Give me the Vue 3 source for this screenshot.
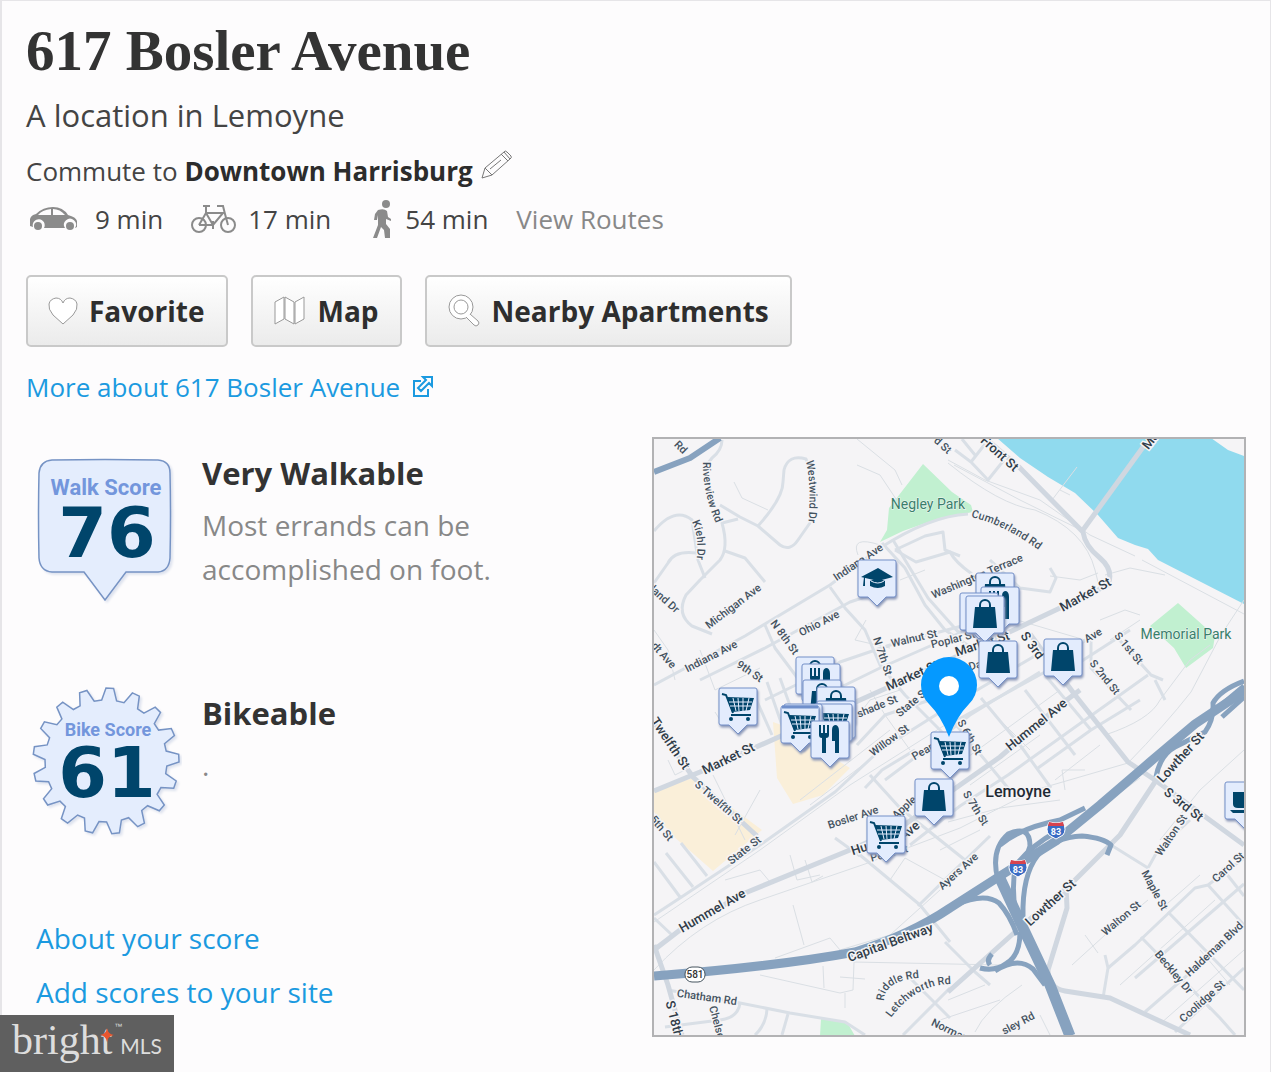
<script setup>
const gear = (() => {
  const teeth = 17
  const pts = []
  const at = (r, deg) => {
    const a = (deg * Math.PI) / 180
    return `${(74 + r * Math.cos(a)).toFixed(1)},${(76 + r * Math.sin(a)).toFixed(1)}`
  }
  for (let i = 0; i < teeth; i++) {
    const c = -87 + (i * 360) / teeth
    pts.push(at(61, c - 7), at(73, c - 3), at(73, c + 3), at(61, c + 7))
  }
  return pts.join(' ')
})()

const major = [
  'M654 791 L700 772 L790 732 L860 700 L960 655 L1020 627 L1060 608 L1108 585 Q1114 570 1100 558 Q1085 546 1083 532 L1020 468 L985 438',
  'M1083 530 L1146 443',
  'M1030 634 L1075 695 L1128 762 L1155 780 L1244 845',
  'M654 950 L680 930 L745 893 L850 850 L900 828 L960 785 L1000 757 L1060 705 L1080 690',
  'M948 992 L1015 932 L1070 885 L1120 835 L1155 782',
  'M654 945 L668 985 L682 1035',
  'M1066 885 L1067 908 L1048 970 Q1048 988 1065 991 L1110 998 L1190 1035',
  'M654 722 L693 777 L757 836',
]
const minor = [
  'M722 440 Q722 450 712 458 L706 466',
  'M720 505 L740 517 L758 526 L780 545 Q790 552 798 540 L812 520',
  'M758 526 Q783 498 783 482 L784 470 Q788 454 806 459 L812 475',
  'M738 519 L722 523 Q729 548 720 560 L700 580 L686 595 Q676 614 692 626 L712 634',
  'M654 531 Q675 506 692 520 L698 560 L705 578',
  'M654 583 L668 563 Q674 550 697 553',
  'M725 551 L745 558 L765 582',
  'M654 685 L745 636 L830 585 L880 548 Q930 516 968 514',
  'M765 625 L775 648 L808 692',
  'M830 587 L845 608 L865 630 L880 665 L905 695 L945 735',
  'M700 680 L765 648 L850 602 L880 592',
  'M882 543 L905 568 L925 605 L945 630 L975 650',
  'M893 540 L928 598 L960 634',
  'M895 550 L916 562 L950 552 Q955 562 972 574',
  'M895 550 L925 536 L943 532 L945 550 L960 556',
  'M800 690 L840 662 L890 645 L962 626 L1020 605',
  'M835 690 L880 668 L962 632',
  'M765 700 L800 683 L811 690 L822 720',
  'M752 690 L772 735 M767 682 L783 728 M780 678 L796 722',
  'M857 745 L885 715 L930 700',
  'M654 915 L680 898 L760 845 L835 792 L880 750 L950 706 L1045 650',
  'M870 775 L900 808 L965 860',
  'M885 780 L925 750 L970 715 L1040 672',
  'M865 788 L882 770 L915 750',
  'M948 725 L1045 672 L1098 630',
  'M910 845 L960 806 L1008 775 L1148 675',
  'M1038 768 L1091 730 L1140 700',
  'M981 698 L1020 745 L1051 788',
  'M1025 690 L1075 755',
  'M948 715 L1008 788',
  'M1045 675 L1091 730',
  'M1091 640 L1091 668 L1131 710',
  'M1115 635 L1151 675 L1163 680',
  'M1060 675 L1130 630',
  'M654 862 L680 897 M666 853 L693 887 M681 843 L707 876 M654 918 L672 935',
  'M854 850 L920 905 L950 942',
  'M835 838 L860 856 M918 906 L960 865 L990 836',
  'M668 990 L740 1003 L790 1013 L845 1022 L865 1035',
  'M740 1003 Q738 1018 720 1020 L665 1027',
  'M767 1009 Q766 1025 755 1035 M788 1014 L782 1035',
  'M950 988 L903 1035 M910 978 L950 1018',
  'M945 942 L975 972 L990 985',
  'M962 439 L975 455 M971 462 L988 480 L1004 460 M955 450 L971 462 L985 444',
  'M1108 968 L1135 945 L1195 888 L1208 885 L1244 858',
  'M1135 978 L1222 903 L1244 884',
  'M1145 1012 L1244 926',
  'M1175 1032 L1244 968',
  'M1141 937 L1220 1018 L1235 1035',
  'M1168 912 L1244 990',
  'M1208 885 L1244 925',
  'M1222 868 L1244 896',
  'M1111 845 L1148 868 L1158 850 L1190 820',
  'M1105 955 L1108 968 L1103 998',
  'M1165 700 L1155 680',
  'M1050 568 L1056 578 L1050 592 L1020 588 L990 560',
]
const thin = [
  'M734 482 L742 498 L768 510 M857 439 L895 470 L902 485 M857 465 L880 475 L900 505',
  'M948 460 L985 480 L1040 500 L1090 535 L1135 556 M1142 560 L1244 614',
  'M948 463 Q1000 505 1035 510 Q1085 530 1095 570 L1098 582',
  'M954 465 L1020 500 L1083 531',
  'M654 970 Q700 920 760 900 L865 864 L960 828 L1035 790 L1128 763 Q1165 725 1191 692 L1221 635 L1244 600',
  'M948 822 L1000 808 L1060 800',
  'M654 922 L760 850 L850 785 L945 725',
  'M1244 750 L1200 790 L1160 840 M1110 800 L1140 778',
  'M1105 735 Q1150 720 1160 700 L1190 660 L1210 645',
  'M1072 965 L1105 935 L1148 900 M1085 935 L1098 953',
  'M793 905 L804 945 M790 855 L797 880 L820 875',
  'M775 958 L830 938 L840 950 L890 935 L940 890',
  'M760 975 L840 993 L853 990 L854 962 L1000 965 M823 966 L824 988 M840 977 L865 979 M845 993 V1008',
  'M975 1032 Q985 1010 1022 985 M948 1000 L985 985',
  'M1098 573 L1080 580 L1050 576 M1105 575 L1130 568 L1165 575 M1000 615 L1085 640',
  'M1052 500 L1077 467 M1060 490 L1070 495',
  'M654 630 L668 650 L675 680 M700 650 L715 690 L760 668',
  'M668 760 L675 775 L685 770 M713 775 L745 840 M750 700 L720 720 L715 712',
  'M800 800 L890 730 M810 805 L880 752',
  'M855 720 L870 700 L900 690 M870 690 L885 715 L910 750',
  'M1160 910 L1200 875 M1120 985 L1215 900 M1160 1024 L1244 950',
  'M1200 950 L1230 985 M1180 975 L1210 1010',
  'M950 770 L1060 690 M970 785 L1040 735 M1000 720 L1030 750 M1055 780 L1100 745 M1065 790 L1062 770 L1085 770',
  'M880 545 Q850 535 858 555 M866 620 L855 640 L890 648 M900 580 L925 570',
  'M1100 620 L1125 610 L1140 615 M1110 640 L1140 620',
  'M940 1020 L1000 1000 M1040 1015 L1050 1035',
  'M760 790 L735 835 M725 880 L760 870 L770 882 M805 860 L812 882 L823 876',
  'M890 880 L905 858 L945 880 M940 850 L980 830',
]
const ramps = [
  'M998 880 Q990 850 1008 834 Q1030 824 1030 846 Q1026 862 1010 868',
  'M1018 925 Q1010 890 1016 865 Q1032 845 1056 832',
  'M1023 917 Q1022 875 1038 855 Q1055 837 1082 836 Q1104 838 1111 845 L1107 855',
  'M955 905 Q985 892 999 903 Q1010 915 1017 935',
  'M1020 932 Q1020 955 1007 963 Q995 972 980 968 M990 965 Q986 960 992 954',
  'M995 971 Q1018 956 1033 969 L1045 985',
  'M1000 845 Q1020 828 1060 820 L1085 808',
  'M1156 777 Q1160 755 1175 747 L1205 732 Q1214 720 1213 703 Q1220 690 1244 681',
  'M1213 712 L1244 686 M1222 717 L1244 697',
]

const labels = [
  ['Rd', 681, 447, 45], ['land Dr', 665, 599, 42], ['Michigan Ave', 733, 606, -37],
  ['Indiana Ave', 858, 562, -34], ['Ohio Ave', 819, 623, -27], ['N 8th St', 785, 637, 54],
  ['d St', 943, 445, 42], ['Washington Terrace', 977, 576, -23], ['Walnut St', 914, 638, -13],
  ['Poplar St', 953, 639, -14], ['Ave', 1093, 635, -30], ['S 1st St', 1129, 648, 50],
  ['S 2nd St', 1105, 677, 51], ['Da', 975, 665, -15], ['N 7th St', 883, 656, 72],
  ['State St', 912, 702, -40], ['shade St', 877, 706, -22], ['Willow St', 889, 740, -36],
  ['Pear St', 928, 748, -30], ['S 6th St', 970, 737, 60], ['S 7th St', 976, 808, 58],
  ['Indiana Ave', 711, 656, -27], ['9th St', 750, 671, 34], ['dt Ave', 664, 655, 48],
  ['S Twelfth St', 719, 802, 41], ['Bosler Ave', 853, 817, -18], ['Apple', 904, 807, -42],
  ['Pearl St', 889, 853, -15], ['5th St', 662, 828, 50], ['Ayers Ave', 958, 871, -42],
  ['State St', 744, 850, -38], ['Chatham Rd', 707, 997, 8], ['Chelsea', 718, 1025, 75],
  ['Norman', 950, 1030, 26], ['sley Rd', 1018, 1023, -28], ['Walton St', 1121, 918, -40],
  ['Maple St', 1155, 890, 62], ['Walton St', 1171, 835, -56], ['Carol St', 1228, 867, -42],
  ['Haldeman Blvd', 1214, 949, -43], ['Beckley Dr', 1174, 972, 50], ['Coolidge St', 1202, 1001, -42],
]
const bigLabels = [
  ['Front St', 1000, 453, 42], ['Ma', 1150, 440, -52], ['Market St', 1085, 594, -29],
  ['Market St', 982, 643, -18], ['Market St', 912, 675, -24], ['S 3rd', 1033, 645, 54],
  ['Hummel Ave', 1036, 724, -39], ['Twelfth St', 671, 743, 56], ['Market St', 728, 758, -26],
  ['Ave', 909, 830, -40], ['Hu', 859, 848, -18], ['Hummel Ave', 712, 910, -30],
  ['Capital Beltway', 890, 942, -20], ['S 18th', 675, 1019, 76], ['Lowther St', 1050, 902, -42],
  ['Lowther St', 1180, 757, -48], ['S 3rd St', 1184, 804, 38],
]
const curved = [
  ['riverview', 'M703 462 Q702 492 717 526', 'Riverview Rd'],
  ['westwind', 'M806 461 Q812 490 808 525', 'Westwind Dr'],
  ['kiehl', 'M692 522 Q700 538 696 564', 'Kiehl Dr'],
  ['cumberland', 'M971 517 Q1005 525 1040 551', 'Cumberland Rd'],
  ['riddle', 'M884 1001 Q884 981 918 978', 'Riddle Rd'],
  ['letchworth', 'M891 1018 Q915 985 950 984', 'Letchworth Rd'],
]
const markers = [
  ['cap', 858, 560], ['bag', 976, 573], ['fork', 981, 587], ['bag', 960, 593], ['bag', 966, 596],
  ['bag', 979, 641], ['bag', 1044, 639], ['cart', 719, 688], ['bag', 796, 657], ['fork', 802, 664],
  ['bag', 803, 680], ['bag', 817, 687], ['cart', 817, 701], ['cart', 814, 704], ['cart', 784, 704],
  ['cart', 781, 706], ['fork', 811, 721], ['cart', 931, 732], ['bag', 915, 779], ['cart', 867, 816],
  ['mug', 1225, 782],
]
</script>

<template>
  <main class="page">
    <header>
      <h1>617 Bosler Avenue</h1>
      <p class="subtitle">A location in Lemoyne</p>
      <p class="commute">
        <span>Commute to <strong>Downtown Harrisburg</strong></span>
        <svg class="pencil" viewBox="0 0 32 30" width="32" height="30" aria-label="Edit">
          <path d="M1 28 L4 18 L23 2 Q24 0 26 2 L30 6 Q31 8 29 9 L11 25 Z M4 18 L11 25 M20 4 L27 11 M23 2 L29 9 M9 19 L20 10" />
        </svg>
      </p>
      <ul class="modes">
        <li>
          <svg class="car" viewBox="0 0 48 26" width="48" height="26">
            <path fill-rule="evenodd" d="M0 20 V13 Q1 9 6 8 Q13 1 23 1 Q33 1 38 9 Q46 11 47 15 V21 L45 22 A6 6 0 1 0 35 22 H14 A6 6 0 1 0 3 21 Z M8 9 L21 9 V3 Q12 4 8 9 M23 3 V9 L35 9 Q30 3 23 3" />
            <circle cx="8" cy="20" r="4" /><circle cx="40" cy="20" r="4" />
          </svg>
          <span>9 min</span>
        </li>
        <li>
          <svg class="bike" viewBox="0 0 46 30" width="46" height="30">
            <circle cx="8" cy="21" r="7" /><circle cx="37" cy="21" r="7" />
            <path d="M8 21 L15 9 H32 L22 21 H8 M12 2 H19 M15 2 V9 L22 21 M26 2 H32 L34 10 L37 21 M22 17 V25" />
          </svg>
          <span>17 min</span>
        </li>
        <li>
          <svg class="walker" viewBox="0 0 20 38" width="20" height="38">
            <circle cx="13" cy="4" r="4" />
            <path d="M5 10 Q11 8 14 11 L15 17 L18 19 V21 L13 19 V24 L17 29 V38 H12 L11 30 L8 27 L4 38 H0 L5 25 V15 L4 20 H1 L2 14 Z" />
          </svg>
          <span>54 min</span>
        </li>
        <li><a class="routes" href="#routes">View Routes</a></li>
      </ul>
      <div class="actions">
        <button type="button">
          <svg viewBox="1 0 28 32" width="28" height="32"><path d="M15 29 L5 20 Q0 14 1 9 Q2 4 8 3 Q13 3 15 8 Q17 3 22 3 Q28 4 29 9 Q30 14 25 20 Z" /></svg>
          <span>Favorite</span>
        </button>
        <button type="button">
          <svg viewBox="0 0 32 32" width="32" height="32"><path d="M1 7 L10 2 V24 L1 29 Z M11 2 L20 7 V29 L11 24 Z M21 7 L30 2 V24 L21 29 Z" /></svg>
          <span>Map</span>
        </button>
        <button type="button">
          <svg viewBox="0 0 32 32" width="32" height="32"><circle cx="13" cy="12" r="12" /><circle cx="13" cy="12" r="7" /><path d="M22 19 L30 26 Q32 28 30 30 Q28 32 26 30 L18 22" /></svg>
          <span>Nearby Apartments</span>
        </button>
      </div>
      <a class="more" href="#more">
        <span>More about 617 Bosler Avenue</span>
        <svg viewBox="0 0 22 22" width="22" height="22"><path d="M9 5 H2 V20 H16 V13 M11 1 H20 V10 L17 7 L9 15 L6 12 L14 4 Z" /></svg>
      </a>
    </header>

    <div class="content">
      <section class="left">
        <div class="scores">
          <article class="score">
            <svg class="badge" viewBox="0 0 150 160" width="150" height="160">
              <path class="shape" d="M20 15 Q73 14 126 15 Q138 16 138 28 Q139 70 138 113 Q137 126 126 127 L94 127 L73 155 L52 127 L20 127 Q8 126 7 113 Q6 70 7 28 Q8 16 20 15 Z" />
              <text class="badge-name" x="74" y="50">Walk Score</text>
              <text class="badge-value" x="75" y="112">76</text>
            </svg>
            <div class="score-text">
              <h2>Very Walkable</h2>
              <p>Most errands can be<br>accomplished on foot.</p>
            </div>
          </article>
          <article class="score">
            <svg class="badge" viewBox="0 0 150 160" width="150" height="160">
              <polygon class="shape" :points="gear" />
              <text class="badge-name bike-name" x="76" y="51">Bike Score</text>
              <text class="badge-value" x="75" y="112">61</text>
            </svg>
            <div class="score-text">
              <h2>Bikeable</h2>
              <p>.</p>
            </div>
          </article>
        </div>
        <nav class="links">
          <a href="#about">About your score</a>
          <a href="#add">Add scores to your site</a>
        </nav>
      </section>

      <section class="map" aria-label="Map of nearby places">
        <svg viewBox="654 439 590 596">
          <defs>
            <g id="cart">
              <path d="M3 6 L7 7 L14 25 M12 27 H32" fill="none" stroke="#00456b" stroke-width="2" />
              <path d="M8 9 L35 10 L31 22 L13 24 Z" fill="#00456b" />
              <path d="M14 10 L17 23 M19 10 L20 23 M24 10 V23 M30 10 L27 23 M10 14 H33 M11 18 H32" stroke="#e3ecfd" />
              <circle cx="12" cy="31" r="2" fill="#00456b" /><circle cx="29" cy="31" r="2" fill="#00456b" />
            </g>
            <g id="bag">
              <path d="M9 11 H29 L31 32 H7 Z" fill="#00456b" />
              <path d="M14 14 V9 A5 5 0 0 1 24 9 V14" fill="none" stroke="#00456b" stroke-width="2" />
            </g>
            <g id="fork" fill="#00456b">
              <path d="M8 4 H10 V12 H12 V4 H14 V12 H16 V4 H18 V14 Q18 17 15 17 V32 H11 V17 Q8 17 8 14 Z" />
              <path d="M21 20 V9 Q21 4 25 4 Q28 5 28 10 V32 H24 V20 Z" />
            </g>
            <g id="cap" fill="#00456b">
              <path d="M3 17 L20 8 L35 17 L20 21 Z M12 21 Q20 17 27 21 V26 Q20 30 12 26 Z M6 17 H7 V26 H5 Z" />
              <path d="M13 21 Q20 25 26 21" fill="none" stroke="#e3ecfd" />
            </g>
            <g id="mug" fill="#00456b">
              <path d="M8 10 H30 V22 Q30 26 26 26 H13 Q8 26 8 22 Z M5 28 H32 V31 H8 Z" />
            </g>
          </defs>

          <rect x="654" y="439" width="590" height="596" fill="#f5f4f6" />
          <path fill="#faefd9" d="M654 790 L693 778 L712 793 L762 830 L713 871 L672 835 L654 812 Z M773 722 L790 728 L785 742 L820 750 L850 768 L823 795 L793 804 L777 778 Z" />
          <path fill="#c1f0d0" d="M923 464 L952 492 L971 505 L973 512 L940 518 L903 531 L880 542 L887 530 L889 508 Z M1178 603 L1215 636 L1213 648 L1186 668 L1174 648 L1150 626 Z M821 1019 L847 1022 L855 1036 H820 Z" />
          <path fill="#90daee" d="M997 438 L1020 458 L1048 477 L1075 493 L1098 515 L1118 538 L1135 545 L1148 549 L1158 560 L1244 604 V456 L1228 450 L1211 438 Z" />

          <g class="thin"><path v-for="d in thin" :key="d" :d="d" /></g>
          <g class="minor"><path v-for="d in minor" :key="d" :d="d" /></g>
          <g class="major"><path v-for="d in major" :key="d" :d="d" /></g>
          <g class="ramps"><path v-for="d in ramps" :key="d" :d="d" /></g>
          <g class="highway">
            <path d="M654 472 L690 458 L720 438" stroke-width="6" />
            <path d="M654 976 Q780 966 855 952 Q910 935 950 908 L1000 876 L1056 841 L1100 805 L1150 762 L1195 724 L1246 690" stroke-width="9" />
            <path d="M998 874 L1024 930 L1050 985 L1070 1036" stroke-width="11" />
          </g>

          <g class="label">
            <text v-for="l in labels" :key="l.join()" :transform="`translate(${l[1]} ${l[2]}) rotate(${l[3]})`" y="4">{{ l[0] }}</text>
          </g>
          <g class="label curved">
            <template v-for="c in curved" :key="c[0]">
              <path :id="c[0]" :d="c[1]" fill="none" />
              <text><textPath :href="`#${c[0]}`">{{ c[2] }}</textPath></text>
            </template>
          </g>
          <g class="label big">
            <text v-for="l in bigLabels" :key="l.join()" :transform="`translate(${l[1]} ${l[2]}) rotate(${l[3]})`" y="5">{{ l[0] }}</text>
          </g>
          <g class="label park">
            <text x="928" y="509">Negley Park</text>
            <text x="1186" y="639">Memorial Park</text>
          </g>
          <text class="label town" x="1018" y="797">Lemoyne</text>

          <rect x="685" y="967" width="20" height="15" rx="7" fill="#fff" stroke="#46545f" />
          <text class="route" x="695" y="978">581</text>
          <g v-for="s in [[1056, 830], [1018, 868]]" :key="s[0]" :transform="`translate(${s[0]} ${s[1]})`">
            <path d="M-7 -8 Q0 -6 7 -8 Q11 0 7 5 L0 9 L-7 5 Q-11 0 -7 -8 Z" fill="#3a6bc4" stroke="#fff" />
            <path d="M-7 -8 Q0 -6 7 -8 L8 -4 H-8 Z" fill="#d8434e" />
            <text class="shield" y="5">83</text>
          </g>

          <g v-for="m in markers" :key="m.join()" class="marker" :transform="`translate(${m[1]} ${m[2]})`">
            <path d="M2 0 H36 Q38 0 38 2 V35 Q38 37 36 37 H28 L19 46 L10 37 H2 Q0 37 0 35 V2 Q0 0 2 0 Z" />
            <use :href="`#${m[0]}`" />
          </g>
          <path d="M782 707 H818" stroke="#6f8fcb" stroke-width="3" />
          <path d="M949 737 Q941 716 929 704 Q921 696 921 685 A28 28 0 0 1 977 685 Q977 696 969 704 Q957 716 949 737 Z" fill="#0599ff" />
          <circle cx="949" cy="686" r="10" fill="#fff" />
        </svg>
      </section>
    </div>

    <footer class="brand">
      <span class="bright">bright</span>
      <svg class="spark" viewBox="0 0 16 16" width="16" height="16"><path d="M8 0 Q9 7 16 8 Q9 9 8 16 Q7 9 0 8 Q7 7 8 0 Z" fill="#e8552f" /></svg>
      <span class="tm">™</span>
      <span class="mls">MLS</span>
    </footer>
  </main>
</template>

<style>
body { background: #fdfcfd; }
</style>

<style scoped>
* { box-sizing: border-box; }
.page {
  position: relative;
  min-height: 100vh;
  padding: 18px 24px 32px 24px;
  border: solid #e6e5e8;
  border-width: 1px 1px 0 2px;
  font-family: "Open Sans", "Noto Sans", sans-serif;
  color: #333;
}
h1, h2, p, ul { margin: 0; padding: 0; }
a { text-decoration: none; color: #1b9ae0; }
h1 { font: bold 57px/64px "Liberation Serif", serif; }
.subtitle { margin-top: 12px; font-size: 31px; line-height: 40px; color: #444; }
.commute { display: flex; gap: 8px; margin-top: 18px; font-size: 26px; line-height: 36px; color: #444; }
.commute strong { color: #2c2c2c; }
.pencil { margin-top: -3px; fill: none; stroke: #777; }
.modes { display: flex; align-items: center; height: 36px; margin-top: 12px; list-style: none; font-size: 26px; line-height: 36px; color: #444; }
.modes li { display: flex; align-items: center; }
.modes li + li { margin-left: 28px; }
.modes li:nth-child(3) { margin-left: 42px; }
.car { margin: 0 17px 0 4px; fill: #8b8b8b; }
.bike { margin-right: 11px; fill: none; stroke: #8b8b8b; stroke-width: 2; }
.walker { margin-right: 12px; fill: #8b8b8b; }
.modes .routes { color: #888; }
.actions { display: flex; gap: 23px; margin-top: 38px; }
button {
  display: flex;
  align-items: center;
  height: 72px;
  gap: 12px;
  padding: 0 21px;
  border: 2px solid #c9c9c9;
  border-radius: 5px;
  background: linear-gradient(#fff, #ebebeb);
  font: bold 28px/36px "Open Sans", sans-serif;
  color: #2e2e2e;
  white-space: nowrap;
}
button svg { fill: #fff; stroke: #999; overflow: visible; }
.more { display: inline-flex; align-items: center; gap: 12px; margin-top: 22px; font-size: 26px; line-height: 36px; vertical-align: top; }
.more svg { fill: none; stroke: #1b9ae0; stroke-width: 2; }
.content { display: grid; grid-template-columns: 1fr 1fr; gap: 32px; margin-top: 32px; }
.scores { display: grid; gap: 8px; }
.score { display: flex; gap: 20px; min-height: 232px; padding: 8px 0 0 6px; }
.badge { flex: none; }
.shape { fill: #e4edfd; stroke: #7693c4; stroke-width: 1.5; filter: drop-shadow(2px 2px 1px #dde2ee); }
.badge-name { font: bold 22px Roboto, "Liberation Sans", sans-serif; fill: #7396dc; text-anchor: middle; }
.bike-name { font-size: 18px; }
.badge-value { font: bold 70px "DejaVu Sans", sans-serif; fill: #00456b; text-anchor: middle; }
.score-text { padding-top: 6px; }
h2 { font-size: 31px; line-height: 44px; }
.score-text p { margin-top: 8px; font-size: 28px; line-height: 44px; color: #888; }
.links { display: flex; flex-direction: column; align-items: flex-start; padding: 2px 0 0 10px; font-size: 28px; line-height: 54px; }
.map { align-self: start; border: 2px solid #b2b2b4; overflow: hidden; }
.map > svg { display: block; width: 100%; }
.thin, .minor, .major, .ramps, .highway { fill: none; stroke-linejoin: round; }
.thin { stroke: #dadfe4; stroke-width: 1; }
.minor { stroke: #d9dfe6; stroke-width: 3; }
.major { stroke: #d0d7e0; stroke-width: 5; }
.ramps { stroke: #87a2bf; stroke-width: 5; }
.highway { stroke: #87a2bf; }
.label { font: 500 11px Roboto, sans-serif; fill: #44525f; text-anchor: middle; stroke: #f5f4f6; stroke-width: 3; paint-order: stroke; }
.curved { text-anchor: start; }
.curved path { stroke: none; }
.big { font-size: 13px; fill: #303c48; }
.park { font-size: 14px; font-weight: 400; fill: #39806b; stroke-width: 1; }
.town { font-size: 16px; fill: #1f2a35; }
.route { font: 500 10px Roboto, sans-serif; fill: #333; text-anchor: middle; }
.shield { font: bold 9px Roboto, sans-serif; fill: #fff; text-anchor: middle; }
.marker > path { fill: #e3ecfd; stroke: #7590c8; filter: drop-shadow(1px 2px 1px #8b98b8); }
.brand {
  position: absolute;
  left: -2px;
  bottom: 0;
  display: flex;
  align-items: flex-start;
  width: 174px;
  height: 57px;
  padding: 0 12px;
  background: #5f5f5f;
  color: #ddd;
}
.bright { font: 42px/50px "Liberation Serif", serif; }
.spark { margin: 12px 0 0 -12px; }
.tm { margin-top: 8px; font: 8px/8px "Liberation Sans", sans-serif; }
.mls { margin: 17px 0 0 -2px; font: 21px/28px Lato, sans-serif; }
</style>
